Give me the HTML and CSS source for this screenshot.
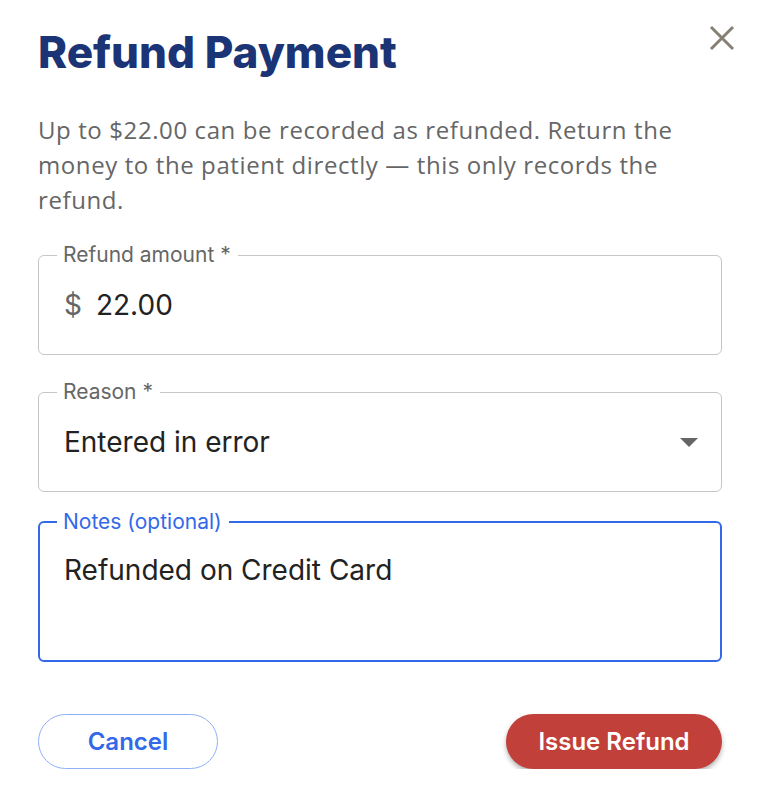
FILE: index.html
```html
<!DOCTYPE html>
<html>
<head>
<meta charset="utf-8">
<link rel="stylesheet" href="styles.css">
</head>
<body>
<div class="dialog">
  <div class="header">
    <h1 class="title">Refund Payment</h1>
    <button class="close" aria-label="Close">
      <svg width="26" height="26" viewBox="0 0 26 26"><path d="M2 2 L24 24 M24 2 L2 24" stroke="#857f74" stroke-width="3" fill="none"/></svg>
    </button>
  </div>
  <p class="desc">Up to $22.00 can be recorded as refunded. Return the money to the patient directly — this only records the refund.</p>

  <fieldset class="field amount">
    <legend class="label">Refund amount *</legend>
    <div class="value"><span class="prefix">$</span><span>22.00</span></div>
  </fieldset>

  <fieldset class="field reason">
    <legend class="label">Reason *</legend>
    <div class="value select"><span>Entered in error</span><span class="caret"></span></div>
  </fieldset>

  <fieldset class="field notes">
    <legend class="label">Notes (optional)</legend>
    <div class="value">Refunded on Credit Card</div>
  </fieldset>

  <div class="actions">
    <button class="btn cancel">Cancel</button>
    <button class="btn issue">Issue Refund</button>
  </div>
</div>
</body>
</html>
```

FILE: styles.css
```css
html, body {
  margin: 0;
  background: #ffffff;
}
.dialog {
  padding: 22px 38px 0 38px;
  font-family: "Inter", "Roboto", sans-serif;
}
.header {
  display: flex;
  justify-content: space-between;
  align-items: flex-start;
}
.title {
  margin: 8px 0 0 0;
  font-family: "Inter", sans-serif;
  font-weight: 800;
  font-size: 44px;
  line-height: 44px;
  color: #1a3475;
  letter-spacing: 0;
}
.close {
  border: none;
  background: none;
  padding: 0;
  margin: 3px -13px 0 0;
  width: 26px;
  height: 26px;
  cursor: pointer;
}
.close svg { display: block; }
.desc {
  margin: 38px 0 0 0;
  font-family: "Open Sans", sans-serif;
  font-size: 24px;
  line-height: 35px;
  letter-spacing: 0.6px;
  color: #666666;
}
.field {
  margin: 26px 0 0 0;
  border: 1px solid #c6c6c6;
  border-radius: 6px;
  padding: 0 25px 32px 25px;
  min-width: 0;
}
.reason { margin-top: 25px; }
.label {
  margin-left: -7px;
  padding: 0 7px 0 6px;
  font-size: 21px;
  line-height: 24px;
  color: #666666;
}
.value {
  margin-top: 21px;
  font-size: 28px;
  line-height: 34px;
  color: #222222;
  display: flex;
  align-items: center;
}
.prefix {
  color: #666666;
  margin-right: 14px;
}
.select { justify-content: space-between; }
.caret {
  width: 0;
  height: 0;
  border-left: 9px solid transparent;
  border-right: 9px solid transparent;
  border-top: 9px solid #666666;
  margin-right: -2px;
}
.notes {
  border: 2px solid #3369e8;
  padding: 0 24px 73px 24px;
  margin-top: 18px;
}
.notes .value { margin-top: 19px; }
.notes .label {
  color: #3369e8;
}
.actions {
  display: flex;
  justify-content: space-between;
  margin-top: 52px;
}
.btn {
  height: 55px;
  border-radius: 28px;
  font-family: "Inter", sans-serif;
  font-weight: 600;
  font-size: 24px;
  cursor: pointer;
}
.cancel {
  width: 180px;
  background: #ffffff;
  border: 1px solid #8fb0f7;
  color: #3369e8;
}
.issue {
  width: 216px;
  background: #c1403a;
  border: none;
  color: #ffffff;
  box-shadow: 0 3px 5px rgba(0,0,0,0.3);
}
```
